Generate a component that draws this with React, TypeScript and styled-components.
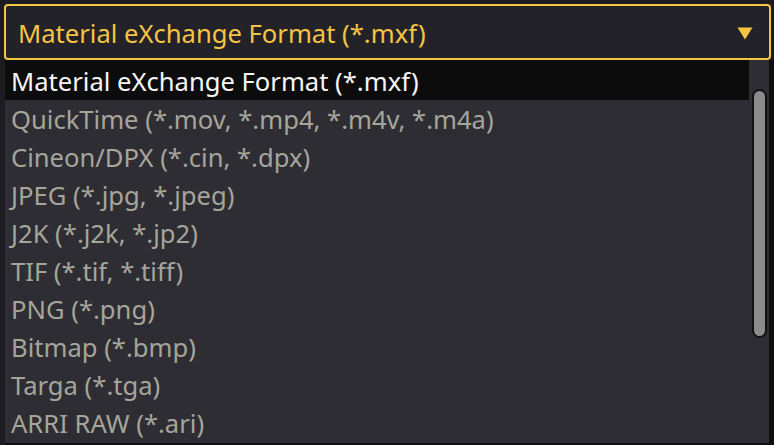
import React from 'react'
import styled, { createGlobalStyle } from 'styled-components';

const formats = [
  'Material eXchange Format (*.mxf)',
  'QuickTime (*.mov, *.mp4, *.m4v, *.m4a)',
  'Cineon/DPX (*.cin, *.dpx)',
  'JPEG (*.jpg, *.jpeg)',
  'J2K (*.j2k, *.jp2)',
  'TIF (*.tif, *.tiff)',
  'PNG (*.png)',
  'Bitmap (*.bmp)',
  'Targa (*.tga)',
  'ARRI RAW (*.ari)'
];

const GlobalStyle = createGlobalStyle`
  html, body {
    margin: 0;
    padding: 0;
    background: #1d1c21;
    overflow: hidden;
  }
  * { box-sizing: border-box; }
`;

function App() {
  const selected = 0;
  return (
    <Page>
      <GlobalStyle />
      <Select>
        <SelectLabel>{formats[selected]}</SelectLabel>
        <Caret viewBox="0 0 16 13">
          <path d="M0.5 0.5 H15.5 L8 12.5 Z" fill="#f6c443" />
        </Caret>
      </Select>
      <Menu>
        <Items>
          {formats.map((f, i) => (
            <Item key={f} active={i === selected} first={i === 0}>{f}</Item>
          ))}
        </Items>
        <Track>
          <Thumb />
        </Track>
      </Menu>
    </Page>
  )
}

const Page = styled.div`
  width: 774px;
  height: 445px;
  padding: 4px 3px 0 4px;
  display: flex;
  flex-direction: column;
  font-family: "Noto Sans", "Open Sans", sans-serif;
`;

const Select = styled.div`
  height: 56px;
  border: 2px solid #f6c443;
  border-radius: 4px;
  background: #232228;
  display: flex;
  align-items: center;
  justify-content: space-between;
  padding: 5px 16px 0 12px;
`;

const SelectLabel = styled.span`
  color: #f6c443;
  font-size: 25.6px;
  padding-bottom: 2px;
`;

const Caret = styled.svg`
  width: 16px;
  height: 13px;
  margin-bottom: 2px;
`;

const Menu = styled.div`
  margin: 0 -3px 0 1px;
  flex: 1;
  display: flex;
  background: #2e2d33;
  border-right: 5px solid #0e0e10;
  border-bottom: 2px solid #0e0e10;
`;

const Items = styled.div`
  flex: 1;
  display: flex;
  flex-direction: column;
`;

const Item = styled.div<{ active: boolean; first: boolean }>`
  height: ${p => (p.first ? '40px' : '38px')};
  display: flex;
  align-items: center;
  padding: ${p => (p.first ? '3px' : '1px')} 0 0 6px;
  font-size: 25.6px;
  white-space: nowrap;
  color: ${p => (p.active ? '#f6f6f6' : '#a6a59c')};
  background: ${p => (p.active ? '#0c0c0c' : 'transparent')};
`;

const Track = styled.div`
  width: 20px;
  padding: 29px 0 0 3px;
`;

const Thumb = styled.div`
  width: 15px;
  height: 249px;
  border: 2px solid #111113;
  border-radius: 8px;
  background: #8b8b8b;
`;

export default App
